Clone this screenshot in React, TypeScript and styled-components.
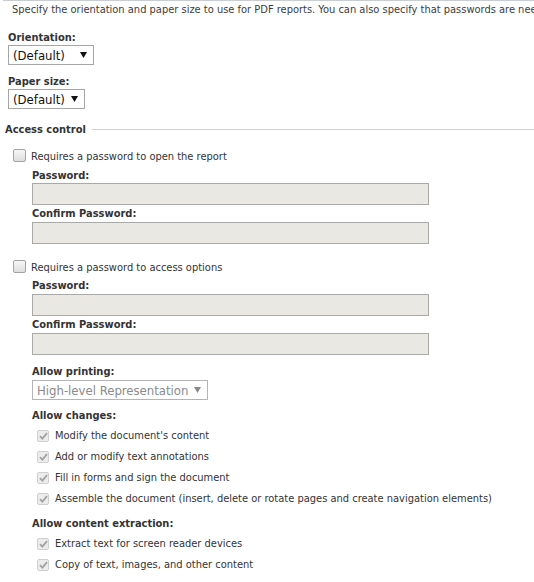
import styled, { createGlobalStyle } from "styled-components";

const GlobalStyle = createGlobalStyle`
  body {
    margin: 0;
    background: #fff;
    font-family: "DejaVu Sans Condensed", "DejaVu Sans", Verdana, sans-serif;
    font-size: 11px;
    color: #333;
  }
`;

const Wrapper = styled.main`
  margin-left: 3px;
  border-top: 1px solid #c9ccd0;
  overflow: hidden;
  padding-bottom: 8px;
`;

const Intro = styled.p`
  margin: 2px 0 0 9px;
  line-height: 14px;
  white-space: nowrap;
  overflow: hidden;
  color: #3c3c3c;
`;

const Label = styled.div<{ $top: number; $left?: number }>`
  box-sizing: border-box;
  height: 14px;
  margin-top: ${(p) => p.$top}px;
  margin-left: ${(p) => p.$left ?? 0}px;
  padding-top: 2px;
  line-height: 12px;
  font-weight: bold;
  color: #333;
  white-space: nowrap;
`;

const SectionHeader = styled.div`
  display: flex;
  align-items: center;
  gap: 6px;
  box-sizing: border-box;
  height: 14px;
  margin: 13px 0 0 2px;
  padding-top: 1px;
  line-height: 13px;
  font-weight: bold;
  color: #333;
  white-space: nowrap;

  &::after {
    content: "";
    flex: 1;
    height: 1px;
    background: #d0d0d0;
  }
`;

const SelectBox = styled.div<{ $width: number; $top: number; $disabled?: boolean }>`
  display: flex;
  align-items: center;
  justify-content: space-between;
  box-sizing: border-box;
  width: ${(p) => p.$width}px;
  height: 20px;
  margin-top: ${(p) => p.$top}px;
  padding: 0 6px 0 4px;
  border: 1px solid ${(p) => (p.$disabled ? "#b4b4b4" : "#a6a6a6")};
  background: #fff;
  font-size: 13px;
  color: ${(p) => (p.$disabled ? "#8a8a8a" : "#111")};
  white-space: nowrap;
`;

const Arrow = styled.svg<{ $disabled?: boolean }>`
  width: 7px;
  height: 6px;
  fill: ${(p) => (p.$disabled ? "#8a8a8a" : "#111")};
  flex-shrink: 0;
`;

const Block = styled.div<{ $left: number }>`
  margin-left: ${(p) => p.$left}px;
`;

const TextInput = styled.input<{ $top: number }>`
  display: block;
  box-sizing: border-box;
  width: 397px;
  height: 22px;
  margin: ${(p) => p.$top}px 0 0;
  padding: 0 4px;
  border: 1px solid #a9a9a9;
  background: #e9e8e2;
  outline: none;
  font: inherit;
`;

const CheckRow = styled.label<{ $top: number; $left: number }>`
  display: flex;
  align-items: center;
  gap: 5px;
  height: 14px;
  margin: ${(p) => p.$top}px 0 0 ${(p) => p.$left}px;
  color: #333;
  white-space: nowrap;
`;

const RowText = styled.span`
  padding-top: 2px;
`;

const Box = styled.span`
  box-sizing: border-box;
  width: 13px;
  height: 13px;
  border: 1px solid #a3a3a3;
  border-radius: 2px;
  background: linear-gradient(#f6f6f6, #dedede);
`;

const OptionList = styled.div<{ $top: number }>`
  display: flex;
  flex-direction: column;
  margin: ${(p) => p.$top}px 0 0 5px;
`;

const OptionRow = styled.div`
  display: flex;
  align-items: center;
  gap: 6px;
  height: 21px;
  color: #333;
  white-space: nowrap;
`;

const DisabledBox = styled.span`
  display: flex;
  align-items: center;
  justify-content: center;
  box-sizing: border-box;
  width: 12px;
  height: 12px;
  border: 1px solid #cfcfcf;
  border-radius: 2px;
  background: #ececec;
`;

function DropArrow({ disabled }: { disabled?: boolean }) {
  return (
    <Arrow $disabled={disabled} viewBox="0 0 7 6">
      <path d="M0 0h7L3.5 6z" />
    </Arrow>
  );
}

function CheckedOption({ text }: { text: string }) {
  return (
    <OptionRow>
      <DisabledBox>
        <svg width="9" height="8" viewBox="0 0 9 8">
          <path d="M1 4.2l2.4 2.4L8 1.2" fill="none" stroke="#a2a2a2" strokeWidth="1.8" />
        </svg>
      </DisabledBox>
      {text}
    </OptionRow>
  );
}

const changes = [
  "Modify the document's content",
  "Add or modify text annotations",
  "Fill in forms and sign the document",
  "Assemble the document (insert, delete or rotate pages and create navigation elements)",
];

const extraction = [
  "Extract text for screen reader devices",
  "Copy of text, images, and other content",
];

export default function App() {
  return (
    <>
      <GlobalStyle />
      <Wrapper>
        <Intro>
          Specify the orientation and paper size to use for PDF reports. You can also specify that passwords are nee
        </Intro>

        <Block $left={5}>
          <Label $top={13}>Orientation:</Label>
          <SelectBox $width={86} $top={1}>
            (Default)
            <DropArrow />
          </SelectBox>
          <Label $top={9}>Paper size:</Label>
          <SelectBox $width={77} $top={1}>
            (Default)
            <DropArrow />
          </SelectBox>
        </Block>

        <SectionHeader>Access control</SectionHeader>

        <CheckRow $top={12} $left={10}>
          <Box />
          <RowText>Requires a password to open the report</RowText>
        </CheckRow>
        <Block $left={29}>
          <Label $top={6}>Password:</Label>
          <TextInput $top={1} type="password" />
          <Label $top={1}>Confirm Password:</Label>
          <TextInput $top={2} type="password" />
        </Block>

        <CheckRow $top={15} $left={10}>
          <Box />
          <RowText>Requires a password to access options</RowText>
        </CheckRow>
        <Block $left={29}>
          <Label $top={5}>Password:</Label>
          <TextInput $top={2} type="password" />
          <Label $top={1}>Confirm Password:</Label>
          <TextInput $top={2} type="password" />

          <Label $top={9}>Allow printing:</Label>
          <SelectBox $width={176} $top={2} $disabled>
            High-level Representation
            <DropArrow disabled />
          </SelectBox>

          <Label $top={8}>Allow changes:</Label>
          <OptionList $top={3}>
            {changes.map((c) => (
              <CheckedOption key={c} text={c} />
            ))}
          </OptionList>

          <Label $top={7}>Allow content extraction:</Label>
          <OptionList $top={3}>
            {extraction.map((c) => (
              <CheckedOption key={c} text={c} />
            ))}
          </OptionList>
        </Block>
      </Wrapper>
    </>
  );
}
